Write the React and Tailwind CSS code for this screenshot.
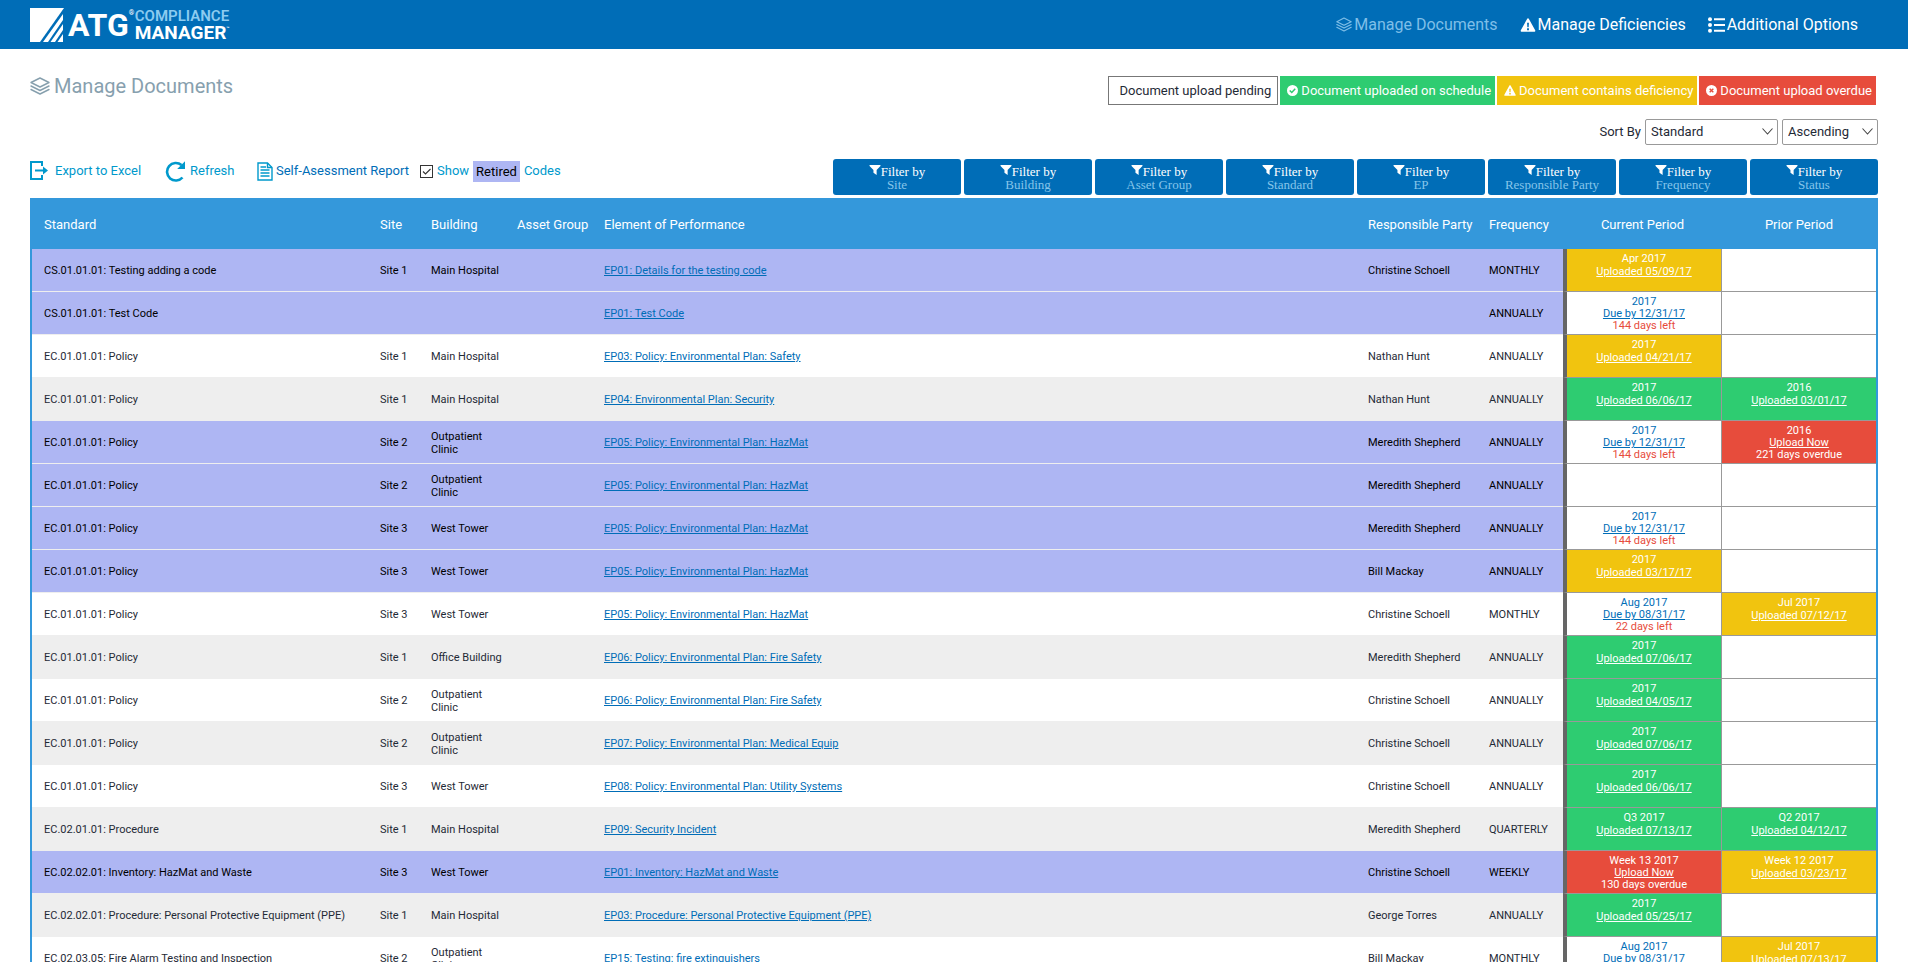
import React from "react";

const GREEN = "bg-[#2ecc71] text-white";
const YELLOW = "bg-[#f1c40f] text-white";
const RED = "bg-[#e74c3c] text-white";
const OPEN = "bg-white text-[#006db7]";

const up = (tone, period, date) => ({ tone, period, link: "Uploaded " + date });
const due = (period, date, left) => ({ tone: OPEN, period, link: "Due by " + date, note: left, noteTone: "text-[#e74c3c]" });
const late = (period, over) => ({ tone: RED, period, link: "Upload Now", note: over, noteTone: "text-white" });

const POLICY = "EC.01.01.01: Policy";
const HAZ = "EP05: Policy: Environmental Plan: HazMat";

const ROWS = [
  { retired: true, std: "CS.01.01.01: Testing adding a code", site: "Site 1", bldg: "Main Hospital", ep: "EP01: Details for the testing code", who: "Christine Schoell", freq: "MONTHLY", cur: up(YELLOW, "Apr 2017", "05/09/17") },
  { retired: true, std: "CS.01.01.01: Test Code", site: "", bldg: "", ep: "EP01: Test Code", who: "", freq: "ANNUALLY", cur: due("2017", "12/31/17", "144 days left") },
  { std: POLICY, site: "Site 1", bldg: "Main Hospital", ep: "EP03: Policy: Environmental Plan: Safety", who: "Nathan Hunt", freq: "ANNUALLY", cur: up(YELLOW, "2017", "04/21/17") },
  { std: POLICY, site: "Site 1", bldg: "Main Hospital", ep: "EP04: Environmental Plan: Security", who: "Nathan Hunt", freq: "ANNUALLY", cur: up(GREEN, "2017", "06/06/17"), prior: up(GREEN, "2016", "03/01/17") },
  { retired: true, std: POLICY, site: "Site 2", bldg: "Outpatient Clinic", ep: HAZ, who: "Meredith Shepherd", freq: "ANNUALLY", cur: due("2017", "12/31/17", "144 days left"), prior: late("2016", "221 days overdue") },
  { retired: true, std: POLICY, site: "Site 2", bldg: "Outpatient Clinic", ep: HAZ, who: "Meredith Shepherd", freq: "ANNUALLY" },
  { retired: true, std: POLICY, site: "Site 3", bldg: "West Tower", ep: HAZ, who: "Meredith Shepherd", freq: "ANNUALLY", cur: due("2017", "12/31/17", "144 days left") },
  { retired: true, std: POLICY, site: "Site 3", bldg: "West Tower", ep: HAZ, who: "Bill Mackay", freq: "ANNUALLY", cur: up(YELLOW, "2017", "03/17/17") },
  { std: POLICY, site: "Site 3", bldg: "West Tower", ep: HAZ, who: "Christine Schoell", freq: "MONTHLY", cur: due("Aug 2017", "08/31/17", "22 days left"), prior: up(YELLOW, "Jul 2017", "07/12/17") },
  { std: POLICY, site: "Site 1", bldg: "Office Building", ep: "EP06: Policy: Environmental Plan: Fire Safety", who: "Meredith Shepherd", freq: "ANNUALLY", cur: up(GREEN, "2017", "07/06/17") },
  { std: POLICY, site: "Site 2", bldg: "Outpatient Clinic", ep: "EP06: Policy: Environmental Plan: Fire Safety", who: "Christine Schoell", freq: "ANNUALLY", cur: up(GREEN, "2017", "04/05/17") },
  { std: POLICY, site: "Site 2", bldg: "Outpatient Clinic", ep: "EP07: Policy: Environmental Plan: Medical Equip", who: "Christine Schoell", freq: "ANNUALLY", cur: up(GREEN, "2017", "07/06/17") },
  { std: POLICY, site: "Site 3", bldg: "West Tower", ep: "EP08: Policy: Environmental Plan: Utility Systems", who: "Christine Schoell", freq: "ANNUALLY", cur: up(GREEN, "2017", "06/06/17") },
  { std: "EC.02.01.01: Procedure", site: "Site 1", bldg: "Main Hospital", ep: "EP09: Security Incident", who: "Meredith Shepherd", freq: "QUARTERLY", cur: up(GREEN, "Q3 2017", "07/13/17"), prior: up(GREEN, "Q2 2017", "04/12/17") },
  { retired: true, std: "EC.02.02.01: Inventory: HazMat and Waste", site: "Site 3", bldg: "West Tower", ep: "EP01: Inventory: HazMat and Waste", who: "Christine Schoell", freq: "WEEKLY", cur: late("Week 13 2017", "130 days overdue"), prior: up(YELLOW, "Week 12 2017", "03/23/17") },
  { std: "EC.02.02.01: Procedure: Personal Protective Equipment (PPE)", site: "Site 1", bldg: "Main Hospital", ep: "EP03: Procedure: Personal Protective Equipment (PPE)", who: "George Torres", freq: "ANNUALLY", cur: up(GREEN, "2017", "05/25/17") },
  { std: "EC.02.03.05: Fire Alarm Testing and Inspection", site: "Site 2", bldg: "Outpatient Clinic", ep: "EP15: Testing: fire extinguishers", who: "Bill Mackay", freq: "MONTHLY", cur: due("Aug 2017", "08/31/17", "22 days left"), prior: up(YELLOW, "Jul 2017", "07/13/17") },
];

const FILTERS = ["Site", "Building", "Asset Group", "Standard", "EP", "Responsible Party", "Frequency", "Status"];

function Layers({ className }) {
  return (
    <svg viewBox="0 0 20 18" className={className} fill="none" stroke="currentColor" strokeWidth="1.4" strokeLinejoin="round" strokeLinecap="round" aria-hidden="true">
      <path d="M10 1 19 5.5 10 10 1 5.5Z" />
      <path d="M1 9l9 4.5L19 9" />
      <path d="M1 12.5l9 4.5 9-4.5" />
    </svg>
  );
}

function Warning({ className, mark }) {
  return (
    <svg viewBox="0 0 16 15" className={className} aria-hidden="true">
      <path d="M8 .4c.4 0 .8.2 1 .6l6.7 12.2c.4.8-.1 1.6-1 1.6H1.300c-.9 0-1.400-.8-1-1.600L7 1c.2-.4.6-.6 1-.6Z" fill="currentColor" />
      <path d="M7 5h2l-.3 5H7.300ZM7 11h2v2H7Z" fill={mark} />
    </svg>
  );
}

function ListIcon({ className }) {
  return (
    <svg viewBox="0 0 17 16" className={className} fill="currentColor" aria-hidden="true">
      <circle cx="2" cy="2.200" r="2" />
      <circle cx="2" cy="8" r="2" />
      <circle cx="2" cy="13.800" r="2" />
      <path d="M6 1.200h11v2H6ZM6 7h11v2H6ZM6 12.800h11v2H6Z" />
    </svg>
  );
}

function Funnel({ className }) {
  return (
    <svg viewBox="0 0 12 11" className={className} fill="currentColor" aria-hidden="true">
      <path d="M0 0h12v1L7.800 5.500V11L4.300 8.500v-3L0 1Z" />
    </svg>
  );
}

function Chevron() {
  return (
    <svg viewBox="0 0 11 7" className="pointer-events-none absolute top-[9px] right-[5px] h-[7px] w-[11px]" fill="none" stroke="#444444" strokeWidth="1.100" aria-hidden="true">
      <path d="M.5.5l5 5.500 5-5.500" />
    </svg>
  );
}

function Logo() {
  return (
    <span className="flex items-center text-white">
      <svg viewBox="0 0 34 34" className="h-[34px] w-[34px]" fill="currentColor" aria-hidden="true">
        <path d="M0 0h34L10 34H0Z" />
        <path d="M33 6v6L18 34h-5Z" />
        <path d="M33 16v6L25 34h-4.500Z" />
        <path d="M33 26v8h-5.500Z" />
      </svg>
      <span className="ml-1 flex items-start font-bold">
        <span className="text-[32px] leading-[34px]">ATG</span>
        <span className="w-[6px] text-[7px] leading-[10px]">®</span>
      </span>
      <span className="flex flex-col font-bold">
        <span className="text-[15px] leading-4 font-semibold text-[#8ccbf0]">COMPLIANCE</span>
        <span className="flex text-[19px] leading-[18px]">MANAGER<span className="text-[5px] leading-[8px]">™</span></span>
      </span>
    </span>
  );
}

function Status({ data }) {
  if (!data) return null;
  return (
    <div className={data.note ? "pt-1 leading-3" : "pt-[3px] leading-[13px]"}>
      <div>{data.period}</div>
      <a href="#" className="underline">{data.link}</a>
      {data.note && <div className={data.noteTone}>{data.note}</div>}
    </div>
  );
}

function Row({ row, index }) {
  const bg = row.retired ? "bg-[#aeb6f3] text-black" : index % 2 ? "bg-[#eeeeee]" : "bg-white";
  const cell = "border-b border-[#eeeeee] pt-px pl-3 leading-[13px] " + bg;
  return (
    <tr className="h-[43px]">
      <td className={cell}>{row.std}</td>
      <td className={cell}>{row.site}</td>
      <td className={cell}>{row.bldg}</td>
      <td className={cell}></td>
      <td className={cell}><a href="#" className="text-[#006db7] underline">{row.ep}</a></td>
      <td className={cell}>{row.who}</td>
      <td className={cell}>{row.freq}</td>
      <td className={"border-r border-b border-l-4 border-r-[#999999] border-b-[#999999] border-l-[#666666] p-0 text-center align-top " + (row.cur ? row.cur.tone : "bg-white")}>
        <Status data={row.cur} />
      </td>
      <td className={"border-b border-[#999999] p-0 text-center align-top " + (row.prior ? row.prior.tone : "bg-white")}>
        <Status data={row.prior} />
      </td>
    </tr>
  );
}

export default function App() {
  return (
    <div className="h-screen overflow-hidden bg-white font-[Roboto,sans-serif] text-sm text-[#1f2a36]">
      <header className="flex h-[49px] items-center justify-between bg-[#006db7] pr-[50px] pl-[30px]">
        <a href="#" className="block"><Logo /></a>
        <nav className="flex items-center gap-[22px] text-base text-white">
          <a href="#" className="flex items-center gap-[2px] text-[#7fbfe8]"><Layers className="h-[15px] w-4" />Manage Documents</a>
          <a href="#" className="flex items-center gap-[2px]"><Warning className="h-[14px] w-4" mark="#006db7" />Manage Deficiencies</a>
          <a href="#" className="flex items-center gap-[2px]"><ListIcon className="h-4 w-[17px]" />Additional Options</a>
        </nav>
      </header>

      <main className="px-[30px]">
        <div className="flex h-[66px] items-start justify-between pt-[27px]">
          <h1 className="flex items-center gap-1 text-xl leading-5 text-[#87a0ae]"><Layers className="h-[18px] w-5" />Manage Documents</h1>
          <ul className="flex gap-[2px] pr-[2px] text-[13px] leading-[29px] text-white">
            <li className="border border-[#777777] pr-[6px] pl-[10px] leading-[27px] text-[#1f2a36]">Document upload pending</li>
            <li className="flex items-center gap-[3px] bg-[#2ecc71] pr-1 pl-[7px]">
              <svg viewBox="0 0 12 12" className="size-[11px]" aria-hidden="true"><circle cx="6" cy="6" r="6" fill="#fff" /><path d="M3 6l2.200 2.200L9 4" fill="none" stroke="#2ecc71" strokeWidth="1.600" /></svg>
              Document uploaded on schedule
            </li>
            <li className="flex items-center gap-[3px] bg-[#f1c40f] pr-1 pl-[7px]"><Warning className="h-[11px] w-3" mark="#f1c40f" />Document contains deficiency</li>
            <li className="flex items-center gap-[3px] bg-[#e74c3c] pr-1 pl-[7px]">
              <svg viewBox="0 0 12 12" className="size-[11px]" aria-hidden="true"><circle cx="6" cy="6" r="6" fill="#fff" /><path d="M4 4l4 4M8 4l-4 4" fill="none" stroke="#e74c3c" strokeWidth="1.500" /></svg>
              Document upload overdue
            </li>
          </ul>
        </div>

        <div className="mb-[10px] flex h-[34px] items-center justify-end gap-1 text-[13px]">
          <label htmlFor="sort-field">Sort By</label>
          <div className="relative">
            <select id="sort-field" className="h-[26px] w-[133px] appearance-none rounded-[2px] border border-[#999999] bg-white pl-[5px]">
              <option>Standard</option>
            </select>
            <Chevron />
          </div>
          <div className="relative">
            <select aria-label="Sort direction" className="h-[26px] w-[96px] appearance-none rounded-[2px] border border-[#999999] bg-white pl-[5px]">
              <option>Ascending</option>
            </select>
            <Chevron />
          </div>
        </div>

        <div className="flex h-[39px] items-start justify-between">
          <div className="flex h-6 items-center text-[13px] text-[#0099cc]">
            <button type="button" className="flex w-[135px] items-center gap-[7px]">
              <svg viewBox="0 0 18 20" className="h-5 w-[18px]" fill="none" stroke="currentColor" strokeWidth="2" aria-hidden="true">
                <path d="M12 5V1H1v17h11v-4" />
                <path d="M5 9.500h9" />
                <path d="M13 5.500l5 4-5 4Z" fill="currentColor" stroke="none" />
              </svg>
              Export to Excel
            </button>
            <button type="button" className="flex w-[92px] items-center gap-[5px]">
              <svg viewBox="0 0 20 21" className="h-[21px] w-5" aria-hidden="true">
                <path d="M17.500 16.500A8.800 8.800 0 1 1 16.500 4" fill="none" stroke="currentColor" strokeWidth="2.600" />
                <path d="M20 .2V8h-7.800Z" fill="currentColor" />
              </svg>
              Refresh
            </button>
            <a href="#" className="flex w-[163px] items-center gap-[3px] whitespace-nowrap text-[#006db7]">
              <svg viewBox="0 0 16 19" className="h-[19px] w-4 text-[#0099cc]" fill="none" stroke="currentColor" strokeWidth="1.400" aria-hidden="true">
                <path d="M1 1h9.500L15 5.500V18H1Z" />
                <path d="M10.500 1v4.500H15M3.500 5H9M3.500 8h9M3.500 11h9M3.500 14h9" />
              </svg>
              Self-Asessment Report
            </a>
            <label className="flex items-center gap-1">
              <span className="relative flex size-[13px]">
                <input type="checkbox" defaultChecked className="size-[13px] appearance-none border border-[#333333] bg-white" />
                <svg viewBox="0 0 13 13" className="pointer-events-none absolute inset-0 size-[13px]" fill="none" stroke="#333333" strokeWidth="1.100" aria-hidden="true"><path d="M3 6.500l2.500 2.500L10.500 4" /></svg>
              </span>
              Show <span className="bg-[#aeb6f3] px-[3px] leading-[21px] text-black">Retired</span> Codes
            </label>
          </div>
          <div className="flex gap-[3px] font-['Liberation_Serif',serif] text-[13px] leading-[13px]">
            {FILTERS.map((name) => (
              <button key={name} type="button" className="flex h-9 w-32 flex-col items-center justify-center rounded-[3px] bg-[#006db7] pt-[2px] text-[#86c5ea]">
                <span className="flex items-start text-white"><Funnel className="h-[10px] w-3" />Filter by</span>
                <span>{name}</span>
              </button>
            ))}
          </div>
        </div>

        <table className="w-full table-fixed border-separate border-spacing-0 border-x-2 border-[#3498db] text-[11px]">
          <colgroup>
            <col className="w-[336px]" />
            <col className="w-[51px]" />
            <col className="w-[86px]" />
            <col className="w-[87px]" />
            <col />
            <col className="w-[121px]" />
            <col className="w-[86px]" />
            <col className="w-[159px]" />
            <col className="w-[154px]" />
          </colgroup>
          <thead>
            <tr className="h-[51px] bg-[#3498db] text-left text-[13px] text-white *:pt-1 *:font-normal *:whitespace-nowrap">
              <th className="pl-3">Standard</th>
              <th className="pl-3">Site</th>
              <th className="pl-3">Building</th>
              <th className="pl-3">Asset Group</th>
              <th className="pl-3">Element of Performance</th>
              <th className="pl-3">Responsible Party</th>
              <th className="pl-3">Frequency</th>
              <th className="text-center">Current Period</th>
              <th className="text-center">Prior Period</th>
            </tr>
          </thead>
          <tbody>
            {ROWS.map((row, i) => <Row key={i} row={row} index={i} />)}
          </tbody>
        </table>
      </main>
    </div>
  );
}
